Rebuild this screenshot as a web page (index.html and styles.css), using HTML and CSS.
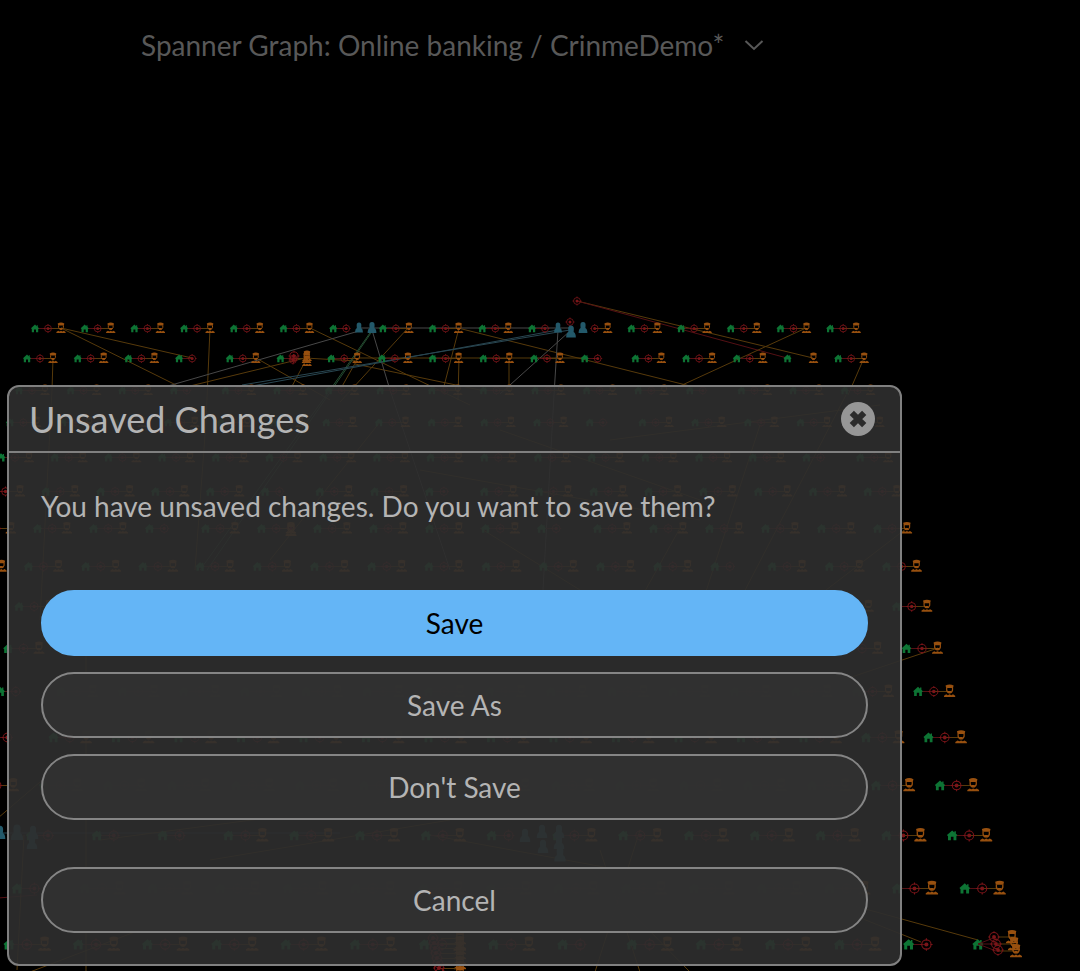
FILE: index.html
```html
<!DOCTYPE html>
<html lang="en">
<head>
    <meta charset="UTF-8">
    <meta name="viewport" content="width=device-width, initial-scale=1.0">
    <title>Spanner Graph</title>
    <link rel="stylesheet" href="styles.css">
</head>
<body>
    <svg class="graph" id="graph" aria-hidden="true">
        <defs>
            <symbol id="house" viewBox="-6 -6 12 12" overflow="visible">
                <path d="M0 -3.9 L-4 -0.3 L-3.2 0.6 V3.7 H-1 V1 H1 V3.7 H3.2 V0.6 L4 -0.3 L2.8 -1.4 V-3.2 H1.7 V-2.3 Z"/>
            </symbol>
            <symbol id="account" viewBox="-6 -6 12 12" overflow="visible">
                <circle r="3.4" fill="none" stroke="currentColor" stroke-width="0.8"/>
                <circle r="1.5"/>
                <path d="M0 -4.5 V-3 M0 3 V4.5 M-4.5 0 H-3 M3 0 H4.5" stroke="currentColor" stroke-width="0.8"/>
            </symbol>
            <symbol id="person" viewBox="-6 -6 12 12" overflow="visible">
                <path d="M-3.3 -4.6 Q0 -6.2 3.3 -4.6 L2.8 -2.4 H-2.8 Z"/>
                <path d="M-2.4 -2.6 V-0.6 Q-1.8 1.5 0 1.5 Q1.8 1.5 2.4 -0.6 V-2.6" fill="none" stroke="currentColor" stroke-width="1"/>
                <path d="M-1.3 0 H1.3 V1.7 H-1.3 Z"/>
                <path d="M-4.6 4.9 V3.9 L-2.8 2.7 L-1.4 3.4 L0 2.7 L1.4 3.4 L2.8 2.7 L4.6 3.9 V4.9 Z"/>
            </symbol>
            <symbol id="client" viewBox="-6 -6 12 12" overflow="visible">
                <path d="M-2.6 -2.8 Q-2.7 -6 0 -6 Q2.7 -6 2.6 -2.8 L2.4 0 Q4.4 1 4.4 5 H-4.4 Q-4.4 1 -2.4 0 Z"/>
            </symbol>
        </defs>
    </svg>

    <header class="topbar">
        <button class="graph-name" type="button">
            Spanner Graph: Online banking / CrinmeDemo*
            <svg class="chevron" viewBox="0 0 20 12" aria-hidden="true"><path d="M1.5 2 L10 10 L18.5 2"/></svg>
        </button>
    </header>

    <main class="dialog" role="dialog" aria-labelledby="dialogTitle">
        <div class="dialog-header">
            <h1 id="dialogTitle">Unsaved Changes</h1>
            <button class="close" type="button" aria-label="Close">
                <svg viewBox="0 0 34 34" aria-hidden="true">
                    <circle cx="17" cy="17" r="17"/>
                    <path d="M10.8 10.8 L23.2 23.2 M23.2 10.8 L10.8 23.2"/>
                </svg>
            </button>
        </div>
        <div class="dialog-body">
            <p>You have unsaved changes. Do you want to save them?</p>
            <div class="actions">
                <button class="btn primary" type="button">Save</button>
                <button class="btn" type="button">Save As</button>
                <button class="btn" type="button">Don't Save</button>
            </div>
            <button class="btn" type="button">Cancel</button>
        </div>
    </main>

    <script src="graph.js"></script>
</body>
</html>
```
FILE: styles.css
```css
:root {
    --dialog-bg: rgba(46, 46, 46, 0.92);
    --border: #808080;
    --text: #b4b4b4;
    --primary: #64b5f6;
}

* {
    margin: 0;
    padding: 0;
    box-sizing: border-box;
}

body {
    min-height: 100vh;
    background: #000;
    color: var(--text);
    font-family: Lato, sans-serif;
    font-size: 28px;
    overflow: hidden;
}

button {
    font: inherit;
    color: inherit;
    background: none;
    border: none;
    cursor: pointer;
}

/* Graph canvas */
.graph {
    position: absolute;
    inset: 0;
    width: 100%;
    height: 100%;
}

.house {
    color: #0d7434;
    fill: currentColor;
}

.account {
    color: #7a1519;
    fill: currentColor;
}

.person {
    color: #98500f;
    fill: currentColor;
}

.client {
    color: #23596a;
    fill: currentColor;
}

.edge {
    fill: none;
    stroke-width: 1;
}

.edge.red {
    stroke: #541014;
}

.edge.gold {
    stroke: #573a0b;
}

.edge.gray {
    stroke: #484848;
}

.edge.blue {
    stroke: #294651;
}

.edge.green {
    stroke: #244b30;
}

/* Top bar */
.topbar {
    position: relative;
    height: 385px;
    padding: 27px 141px;
}

.graph-name {
    display: flex;
    align-items: center;
    gap: 20px;
    color: #585858;
    line-height: 36px;
    white-space: nowrap;
}

.chevron {
    width: 20px;
    height: 12px;
    fill: none;
    stroke: currentColor;
    stroke-width: 2;
}

/* Dialog */
.dialog {
    position: relative;
    max-width: 895px;
    margin: 0 7px;
    background: var(--dialog-bg);
    border: 2px solid var(--border);
    border-radius: 12px;
}

.dialog-header {
    display: flex;
    align-items: center;
    justify-content: space-between;
    height: 66px;
    padding: 0 25px 0 20px;
    border-bottom: 2px solid var(--border);
}

h1 {
    font-size: 36px;
    font-weight: 400;
}

.close {
    width: 34px;
    height: 34px;
}

.close svg {
    display: block;
    fill: #969696;
    stroke: #2b2b2b;
}

.close circle {
    stroke: none;
}

.close path {
    stroke-width: 6;
}

.dialog-body {
    padding: 35px 32px 31px;
}

p {
    line-height: 36px;
    margin-bottom: 66px;
}

.actions {
    display: flex;
    flex-direction: column;
    gap: 16px;
    margin-bottom: 47px;
}

.btn {
    display: block;
    width: 100%;
    height: 66px;
    padding-bottom: 1px;
    background: rgba(49, 49, 49, 0.94);
    border: 2px solid #858585;
    border-radius: 33px;
}

.btn.primary {
    background: var(--primary);
    border-color: var(--primary);
    color: #000;
}
```
FILE: graph.js
```js
const NS = 'http://www.w3.org/2000/svg';
const graph = document.getElementById('graph');

// y, first house x, column spacing, distance between nodes of a chain,
// number of chains, columns left out: h = house, a = account, p = person
const rows = [
    { y: 328, x: 35, step: 49.7, d: 13, n: 17, skip: '6p 10p 11h' },
    { y: 358, x: 27, step: 50.7, d: 13, n: 17, skip: '3p 11p 15a' },
    { y: 390, x: 19, step: 51.6, d: 13, n: 17, skip: '3p 13p' },
    { y: 422, x: 10, step: 52.7, d: 13.3, n: 17, skip: '11p' },
    { y: 457, x: 1, step: 53.7, d: 14, n: 17, skip: '15p' },
    { y: 491, x: -9, step: 54.8, d: 14.5, n: 17, skip: '5p 8p' },
    { y: 528, x: -18.5, step: 56, d: 14.7, n: 17, skip: '3p 10p' },
    { y: 566, x: -28.7, step: 57.2, d: 15, n: 17, skip: '13p' },
    { y: 606, x: 19, step: 58.5, d: 15.2, n: 16, skip: '' },
    { y: 648, x: 8, step: 59.9, d: 15.5, n: 16, skip: '' },
    { y: 691, x: 0, step: 61.2, d: 15.8, n: 16, skip: '0p' },
    { y: 737, x: -9, step: 62.5, d: 16.3, n: 16, skip: '0p' },
    { y: 785, x: -20, step: 64, d: 16.6, n: 16, skip: '' },
    { y: 835, x: 31, step: 65.8, d: 17, n: 15, skip: '0p 1p 2p 7p' },
    { y: 888, x: 17, step: 67.7, d: 17.4, n: 15, skip: '0p' },
    { y: 944, x: 9, step: 69.2, d: 17.8, n: 15, skip: '8p 13p 14a 14p' }
];

const edges = [
    ['gold', 61, 328, 192, 358], ['gold', 61, 328, 180, 387], ['gold', 53, 358, 52, 390],
    ['gold', 210, 328, 206, 422], ['gold', 310, 328, 470, 405], ['gold', 256, 358, 330, 400],
    ['gold', 307, 358, 290, 390], ['gold', 190, 386, 305, 358], ['gold', 305, 358, 357, 361],
    ['gold', 408, 328, 340, 402], ['gold', 358, 358, 340, 390], ['gold', 459, 328, 443, 390],
    ['gold', 459, 358, 458, 400], ['gold', 509, 358, 509, 390], ['gold', 358, 358, 584, 358],
    ['gold', 458, 328, 690, 386], ['gold', 355, 364, 480, 390], ['gold', 577, 301, 813, 358],
    ['red', 577, 301, 787, 358], ['gold', 806, 328, 680, 386], ['gold', 864, 358, 848, 395],
    ['gray', 168, 386, 359, 331], ['gray', 359, 328, 570, 328], ['gray', 570, 331, 500, 394],
    ['gray', 372, 330, 390, 390], ['gray', 558, 330, 554, 395],
    ['green', 372, 330, 330, 390], ['green', 373, 330, 331, 391],
    ['blue', 242, 385, 570, 330], ['blue', 252, 386, 558, 330],
    ['gold', 938, 648, 795, 696], ['gold', 978, 940, 840, 902], ['gold', 921, 942, 790, 890],
    ['gold', 907, 528, 800, 610], ['blue', -2, 833, 340, 833], ['red', -2, 898, 37, 895],
    ['gold', -2, 818, 40, 782], ['gold', 17, 970, 24, 835], ['gold', 30, 972, 140, 930],
    ['gold', 86, 972, 86, 650], ['gold', 595, 972, 640, 830], ['gold', 640, 972, 600, 850],
    ['gold', 690, 972, 590, 870], ['gold', 610, 440, 880, 405], ['gold', 420, 470, 700, 520],
    ['gold', 380, 422, 270, 560], ['green', 330, 390, 200, 570], ['green', 331, 391, 207, 570],
    ['gold', 500, 430, 700, 500], ['gold', 760, 425, 700, 610], ['gold', 846, 395, 740, 600],
    ['gray', 390, 390, 450, 570], ['gray', 554, 395, 543, 590], ['gold', 52, 390, 40, 620],
    ['gold', 206, 422, 195, 570], ['gold', 480, 528, 580, 590], ['gold', 680, 528, 640, 600],
    ['gold', 100, 840, 480, 790], ['gold', 210, 860, 450, 820], ['gold', 430, 835, 620, 870]
];

// nodes that stand outside the regular rows
const extras = [
    ['account', 577, 301, 1], ['account', 570, 322, 1],
    ['client', 359, 328, 0.9], ['client', 372, 328, 1],
    ['client', 558, 328, 0.9], ['client', 571, 332, 1.1], ['client', 583, 328, 1],
    ['account', 294, 356, 1.2], ['account', 293, 360, 1], ['person', 307, 361, 1],
    ['person', 307, 356, 1], ['account', 291, 528, 1.1], ['person', 291, 530, 1.2],
    ['client', 0, 833, 1.2], ['client', 17, 833, 1.4], ['client', 33, 833, 1.2],
    ['client', 32, 843, 1.2], ['client', 525, 836, 1.2], ['client', 542, 832, 1.2],
    ['client', 543, 847, 1.2], ['client', 559, 832, 1.2], ['client', 559, 843, 1.2],
    ['client', 560, 855, 1.3],
    ['account', 994, 937, 1.3], ['account', 996, 944, 1.3], ['account', 998, 950, 1.3],
    ['person', 1012, 937, 1.3], ['person', 1014, 944, 1.3], ['person', 1016, 951, 1.3]
];

function edge(color, x1, y1, x2, y2) {
    const line = document.createElementNS(NS, 'line');
    line.setAttribute('class', `edge ${color}`);
    line.setAttribute('x1', x1);
    line.setAttribute('y1', y1);
    line.setAttribute('x2', x2);
    line.setAttribute('y2', y2);
    graph.appendChild(line);
}

function node(type, x, y, scale) {
    const use = document.createElementNS(NS, 'use');
    const size = 12 * scale;
    use.setAttribute('class', type);
    use.setAttribute('href', `#${type}`);
    use.setAttribute('x', x - size / 2);
    use.setAttribute('y', y - size / 2);
    use.setAttribute('width', size);
    use.setAttribute('height', size);
    graph.appendChild(use);
}

edges.forEach(e => edge(...e));

rows.forEach(row => {
    const skip = row.skip.split(' ');
    for (let i = 0; i < row.n; i++) {
        const x = row.x + i * row.step;
        const scale = row.d / 13;
        const has = part => !skip.includes(i + part);

        if (has('a')) {
            if (has('h')) edge('red', x, row.y + 0.5, x + row.d, row.y + 0.5);
            if (has('p')) edge('gold', x + row.d, row.y + 0.5, x + row.d * 2, row.y + 0.5);
            node('account', x + row.d, row.y + 0.5, scale);
        }
        if (has('h')) node('house', x, row.y + 0.5, scale);
        if (has('p')) node('person', x + row.d * 2, row.y, scale);
    }
});

// stack of accounts and people at the bottom edge
for (let y = 938; y < 976; y += 5) {
    edge('gold', 441, y + 0.5, 460, y + 0.5);
    node('account', 433 + (y - 938) / 5, y, 1.3);
    node('person', 460, y, 1.3);
}

[937, 944, 951].forEach(y => {
    edge('red', 978, 944, 996, y);
    edge('gold', 998, y, 1014, y);
});

extras.forEach(e => node(...e));
```
